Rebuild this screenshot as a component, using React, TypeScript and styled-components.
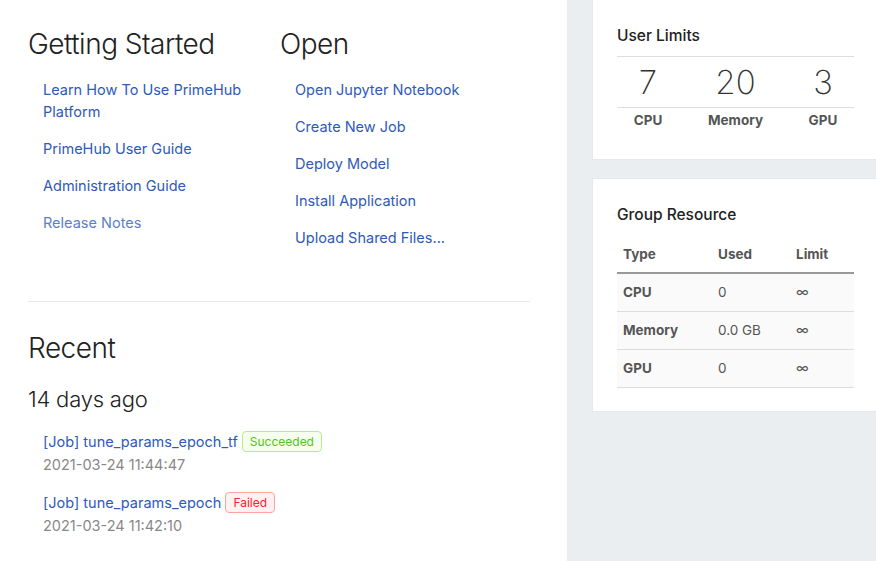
import React from "react";
import styled, { createGlobalStyle } from "styled-components";

const Global = createGlobalStyle`
  html, body { margin: 0; padding: 0; background: #fff; }
  body { font-family: Inter, "Liberation Sans", sans-serif; overflow: hidden; }
  * { box-sizing: border-box; }
`;

const Page = styled.div`
  display: flex;
  width: 876px;
  height: 561px;
  overflow: hidden;
`;

const Main = styled.div`
  width: 567px;
  flex: none;
  padding: 0 37px 0 28px;
  background: #fff;
`;

const Side = styled.div`
  flex: 1;
  background: #ebeef1;
  padding-left: 25px;
  display: flex;
  flex-direction: column;
  gap: 18px;
`;

const Columns = styled.div`
  display: grid;
  grid-template-columns: 252px 1fr;
  padding-top: 24px;
  padding-bottom: 52px;
  border-bottom: 1px solid #e8e8e8;
`;

const Heading = styled.h2`
  margin: 0 0 15px;
  font-size: 28px;
  line-height: 40px;
  font-weight: 300;
  color: #222;
  letter-spacing: -0.5px;
`;

const SubHeading = styled.h3`
  margin: 0 0 14px;
  font-size: 22px;
  line-height: 32px;
  font-weight: 300;
  color: #222;
  letter-spacing: -0.2px;
`;

const LinkList = styled.ul`
  list-style: none;
  margin: 0;
  padding: 0 16px 0 15px;
  display: flex;
  flex-direction: column;
  gap: 15px;
`;

const Link = styled.a<{ $faded?: boolean }>`
  font-size: 14.5px;
  line-height: 22px;
  color: ${(p) => (p.$faded ? "#5b80c6" : "#2e5ab8")};
  text-decoration: none;
  display: block;
`;

const Recent = styled.section`
  padding-top: 26px;
`;

const JobList = styled.div`
  padding-left: 15px;
  display: flex;
  flex-direction: column;
  gap: 13px;
`;

const Job = styled.div`
  display: flex;
  flex-direction: column;
`;

const JobLine = styled.div`
  display: flex;
  align-items: center;
  gap: 4px;
  height: 24px;
`;

const JobLink = styled.a`
  font-size: 14.5px;
  color: #2e5ab8;
  text-decoration: none;
`;

const Tag = styled.span<{ $kind: "success" | "error" }>`
  font-size: 12px;
  line-height: 19px;
  padding: 0 7px;
  border-radius: 4px;
  border: 1px solid ${(p) => (p.$kind === "success" ? "#b7eb8f" : "#ffa39e")};
  background: ${(p) => (p.$kind === "success" ? "#f6ffed" : "#fff1f0")};
  color: ${(p) => (p.$kind === "success" ? "#52c41a" : "#f5222d")};
`;

const JobDate = styled.div`
  font-size: 14.5px;
  line-height: 24px;
  color: #888;
`;

const Card = styled.div<{ $flushTop?: boolean }>`
  width: 285px;
  flex: none;
  background: #fff;
  border: 1px solid #e6e8eb;
  margin-top: ${(p) => (p.$flushTop ? "-1px" : "0")};
  padding: 24px 23px 23px 24px;
`;

const CardTitle = styled.div`
  font-size: 15.5px;
  line-height: 24px;
  font-weight: 500;
  color: #222;
`;

const Limits = styled.div`
  margin-top: 8px;
  border-top: 1px solid #ddd;
  display: grid;
  grid-template-columns: 62px 1fr 62px;
  width: 237px;
`;

const LimitValue = styled.div`
  font-size: 33px;
  font-weight: 200;
  line-height: 50px;
  color: #333;
  text-align: center;
  border-bottom: 1px solid #ddd;
`;

const LimitLabel = styled.div`
  font-size: 13.5px;
  font-weight: 700;
  line-height: 24px;
  color: #555;
  text-align: center;
`;

const Table = styled.table`
  margin-top: 8px;
  width: 237px;
  border-collapse: collapse;
  font-size: 13.5px;
  color: #555;
`;

const Th = styled.th<{ $w: number }>`
  width: ${(p) => p.$w}px;
  text-align: left;
  padding: 0 6px;
  height: 38px;
  font-weight: 700;
  border-bottom: 2px solid #999;
`;

const Tr = styled.tr`
  background: #fafafa;
`;

const Td = styled.td<{ $bold?: boolean }>`
  padding: 0 6px;
  height: 38px;
  font-weight: ${(p) => (p.$bold ? 700 : 400)};
  border-bottom: 1px solid #ddd;
`;

const CardSpacer = styled.div`
  height: 4px;
`;

const gettingStarted = [
  "Learn How To Use PrimeHub Platform",
  "PrimeHub User Guide",
  "Administration Guide",
  "Release Notes",
];
const openLinks = [
  "Open Jupyter Notebook",
  "Create New Job",
  "Deploy Model",
  "Install Application",
  "Upload Shared Files...",
];

const resources = [
  { type: "CPU", used: "0", limit: "∞" },
  { type: "Memory", used: "0.0 GB", limit: "∞" },
  { type: "GPU", used: "0", limit: "∞" },
];

export default function App() {
  return (
    <>
      <Global />
      <Page>
        <Main>
          <Columns>
            <div>
              <Heading>Getting Started</Heading>
              <LinkList>
                {gettingStarted.map((l, i) => (
                  <li key={l}>
                    <Link href="#" $faded={i === 3}>
                      {l}
                    </Link>
                  </li>
                ))}
              </LinkList>
            </div>
            <div>
              <Heading>Open</Heading>
              <LinkList>
                {openLinks.map((l) => (
                  <li key={l}>
                    <Link href="#">{l}</Link>
                  </li>
                ))}
              </LinkList>
            </div>
          </Columns>
          <Recent>
            <Heading>Recent</Heading>
            <SubHeading>14 days ago</SubHeading>
            <JobList>
              <Job>
                <JobLine>
                  <JobLink href="#">[Job] tune_params_epoch_tf</JobLink>
                  <Tag $kind="success">Succeeded</Tag>
                </JobLine>
                <JobDate>2021-03-24 11:44:47</JobDate>
              </Job>
              <Job>
                <JobLine>
                  <JobLink href="#">[Job] tune_params_epoch</JobLink>
                  <Tag $kind="error">Failed</Tag>
                </JobLine>
                <JobDate>2021-03-24 11:42:10</JobDate>
              </Job>
            </JobList>
          </Recent>
        </Main>
        <Side>
          <Card $flushTop>
            <CardTitle>User Limits</CardTitle>
            <Limits>
              <LimitValue>7</LimitValue>
              <LimitValue>20</LimitValue>
              <LimitValue>3</LimitValue>
              <LimitLabel>CPU</LimitLabel>
              <LimitLabel>Memory</LimitLabel>
              <LimitLabel>GPU</LimitLabel>
            </Limits>
            <CardSpacer />
          </Card>
          <Card>
            <CardTitle>Group Resource</CardTitle>
            <Table>
              <thead>
                <tr>
                  <Th $w={95}>Type</Th>
                  <Th $w={78}>Used</Th>
                  <Th $w={64}>Limit</Th>
                </tr>
              </thead>
              <tbody>
                {resources.map((r) => (
                  <Tr key={r.type}>
                    <Td $bold>{r.type}</Td>
                    <Td>{r.used}</Td>
                    <Td>{r.limit}</Td>
                  </Tr>
                ))}
              </tbody>
            </Table>
          </Card>
        </Side>
      </Page>
    </>
  );
}
